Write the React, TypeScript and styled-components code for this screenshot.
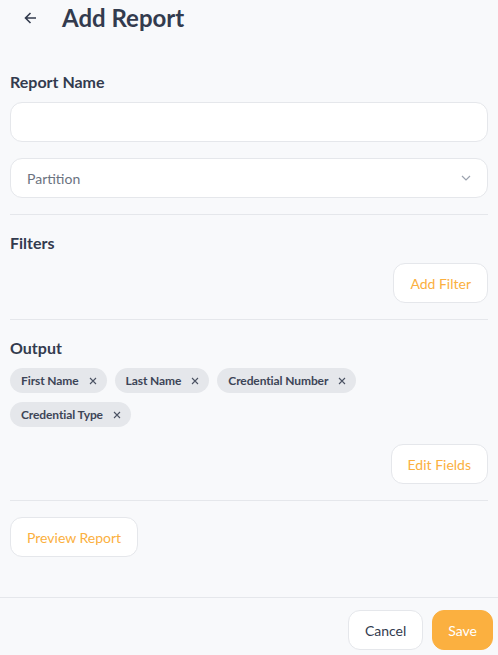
import styled, { createGlobalStyle } from 'styled-components';

const GlobalStyle = createGlobalStyle`
  html, body {
    margin: 0;
    padding: 0;
    background: #f8f9fb;
    overflow: hidden;
  }
  body {
    font-family: Lato, 'Liberation Sans', sans-serif;
    color: #333b4e;
  }
  * { box-sizing: border-box; }
`;

const Page = styled.div`
  display: flex;
  flex-direction: column;
  width: 498px;
  min-height: 655px;
`;

const Header = styled.div`
  display: flex;
  align-items: center;
  height: 36px;
  padding-left: 23px;
  gap: 25px;
`;

const BackButton = styled.button`
  display: flex;
  align-items: center;
  justify-content: center;
  width: 14px;
  height: 14px;
  padding: 0;
  border: none;
  background: none;
  color: #333b4e;
`;

const Title = styled.h1`
  margin: 0;
  font-size: 24px;
  font-weight: 700;
  line-height: 36px;
  color: #333b4e;
`;

const Body = styled.div`
  display: flex;
  flex-direction: column;
  padding: 34px 10px 40px;
`;

const Label = styled.h2`
  margin: 0 0 8px;
  font-size: 16px;
  font-weight: 700;
  line-height: 24px;
  color: #333b4e;
`;

const Field = styled.div`
  display: flex;
  align-items: center;
  justify-content: space-between;
  height: 40px;
  padding: 0 16px;
  background: #fff;
  border: 1px solid #e5e7eb;
  border-radius: 12px;
  font-size: 14px;
  color: #6b7280;
`;

const Stack = styled.div`
  display: flex;
  flex-direction: column;
  gap: 16px;
`;

const Divider = styled.hr`
  margin: 16px 0;
  border: none;
  border-top: 1px solid #e5e7eb;
`;

const Actions = styled.div<{ $align?: 'start' | 'end' }>`
  display: flex;
  justify-content: ${(p) => (p.$align === 'start' ? 'flex-start' : 'flex-end')};
`;

const Button = styled.button<{ $variant?: 'outline' | 'primary' | 'plain' }>`
  height: 40px;
  padding: 0 ${(p) => (p.$variant === 'primary' ? '15px' : '16px')};
  border-radius: 12px;
  font-family: inherit;
  font-size: 14px;
  cursor: pointer;
  border: 1px solid ${(p) => (p.$variant === 'primary' ? '#fbb040' : '#e5e7eb')};
  background: ${(p) => (p.$variant === 'primary' ? '#fbb040' : '#fff')};
  color: ${(p) =>
    p.$variant === 'primary' ? '#fff' : p.$variant === 'plain' ? '#333b4e' : '#fbb040'};
`;

const Chips = styled.div`
  display: flex;
  flex-wrap: wrap;
  gap: 9px 8px;
  max-width: 420px;
  margin-bottom: 17px;
`;

const Chip = styled.span`
  display: inline-flex;
  align-items: center;
  gap: 10px;
  height: 25px;
  padding: 0 10px 0 11px;
  border-radius: 13px;
  background: #e5e7eb;
  font-size: 12px;
  font-weight: 700;
  color: #3d4557;
  letter-spacing: -0.1px;
`;

const Footer = styled.div`
  display: flex;
  justify-content: flex-end;
  gap: 9px;
  padding: 12px 5px 5px;
  border-top: 1px solid #e5e7eb;
  margin-top: auto;
`;

const fields = ['First Name', 'Last Name', 'Credential Number', 'Credential Type'];

function Close() {
  return (
    <svg width="8" height="8" viewBox="0 0 8 8" fill="none" stroke="#4b5263" strokeWidth="1.1">
      <path d="M1 1l6 6M7 1L1 7" />
    </svg>
  );
}

export default function App() {
  return (
    <Page>
      <GlobalStyle />
      <Header>
        <BackButton type="button">
          <svg width="13" height="12" viewBox="0 0 13 12" fill="none" stroke="currentColor" strokeWidth="1.6">
            <path d="M12 6H1.5M6.5 1L1.5 6l5 5" />
          </svg>
        </BackButton>
        <Title>Add Report</Title>
      </Header>
      <Body>
        <Label>Report Name</Label>
        <Stack>
          <Field />
          <Field>
            Partition
            <svg width="10" height="6" viewBox="0 0 10 6" fill="none" stroke="#9ca3af" strokeWidth="1.2">
              <path d="M1 1l4 4 4-4" />
            </svg>
          </Field>
        </Stack>
        <Divider />
        <Label>Filters</Label>
        <Actions>
          <Button type="button">Add Filter</Button>
        </Actions>
        <Divider />
        <Label>Output</Label>
        <Chips>
          {fields.map((f) => (
            <Chip key={f}>
              {f}
              <Close />
            </Chip>
          ))}
        </Chips>
        <Actions>
          <Button type="button">Edit Fields</Button>
        </Actions>
        <Divider />
        <Actions $align="start">
          <Button type="button">Preview Report</Button>
        </Actions>
      </Body>
      <Footer>
        <Button type="button" $variant="plain">Cancel</Button>
        <Button type="button" $variant="primary">Save</Button>
      </Footer>
    </Page>
  );
}
